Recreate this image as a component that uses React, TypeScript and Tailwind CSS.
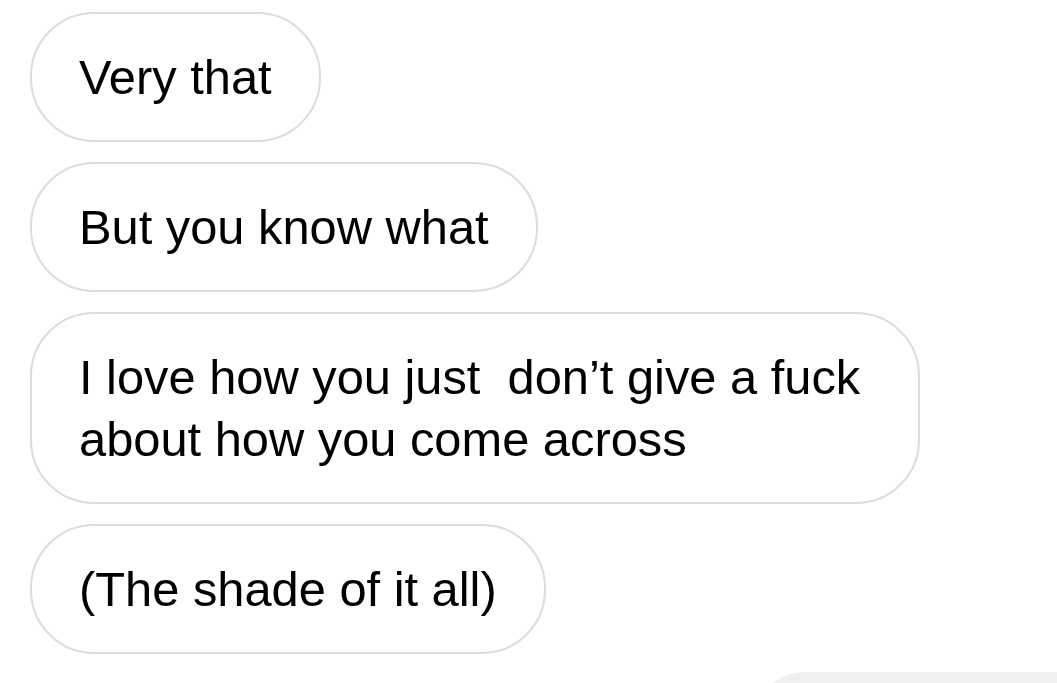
const messages = [
  "Very that",
  "But you know what",
  "I love how you just\u00a0 don\u2019t give a fuck about how you come across",
  "(The shade of it all)",
]

function Bubble({ text }: { text: string }) {
  return (
    <div className="max-w-[890px] self-start rounded-[64px] border-2 border-[#dcdcdc] bg-white px-[47px] py-[32px] text-[48.8px] leading-[62px] text-black">
      {text}
    </div>
  )
}

export default function App() {
  return (
    <div
      className="h-[683px] w-[1057px] overflow-hidden bg-white"
      style={{ fontFamily: '"Liberation Sans", Arial, sans-serif' }}
    >
      <div className="flex flex-col gap-[20px] pl-[30px] pt-[12px]">
        {messages.map((m) => (
          <Bubble key={m} text={m} />
        ))}
        <div className="-mr-[40px] mt-[-2px] h-[80px] w-[347px] self-end rounded-tl-[56px] bg-[#efefef]" />
      </div>
    </div>
  )
}
